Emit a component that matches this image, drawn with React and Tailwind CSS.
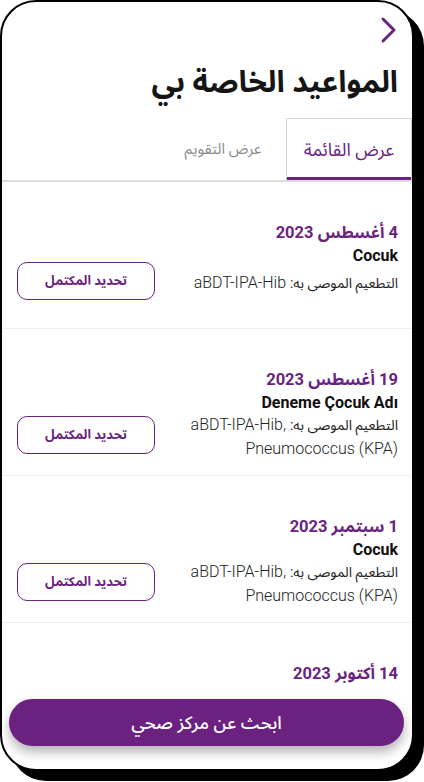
import React from "react";

const appointments = [
  {
    date: "4 أغسطس 2023",
    name: "Cocuk",
    vaccines: ["aBDT-IPA-Hib"],
  },
  {
    date: "19 أغسطس 2023",
    name: "Deneme Çocuk Adı",
    vaccines: ["aBDT-IPA-Hib,", "Pneumococcus (KPA)"],
  },
  {
    date: "1 سبتمبر 2023",
    name: "Cocuk",
    vaccines: ["aBDT-IPA-Hib,", "Pneumococcus (KPA)"],
  },
];

const App = () => {
  return (
    <div className="w-[424px] h-[782px] bg-white overflow-hidden">
      <div
        dir="rtl"
        className="relative w-[414px] h-[771px] bg-white border-2 border-black rounded-[36px] shadow-[10px_10px_0_0_#000] overflow-hidden font-['Roboto','Noto_Sans_Arabic','DejaVu_Sans',sans-serif]"
      >
        {/* Header */}
        <div className="pr-[14px] pt-[14px]">
          <svg width="18" height="28" viewBox="0 0 18 28" className="block">
            <path
              d="M3 3 L14 14 L3 25"
              fill="none"
              stroke="#6b2381"
              strokeWidth="3"
              strokeLinecap="round"
              strokeLinejoin="round"
            />
          </svg>
          <h1 className="mt-[18px] text-[30px] leading-[40px] font-bold text-[#151515]">
            المواعيد الخاصة بي
          </h1>
        </div>

        {/* Tabs */}
        <div className="mt-[16px] flex border-b-2 border-[#dcdcdc]">
          <div className="w-[126px] h-[62px] -mb-[2px] flex items-center justify-center border border-b-0 border-[#d4d4d4] shadow-[inset_0_-3px_0_#6b2381]">
            <span className="text-[18px] text-[#6b2381]">عرض القائمة</span>
          </div>
          <div className="w-[126px] h-[62px] flex items-center justify-center">
            <span className="text-[15px] text-[#8a8a8a]">عرض التقويم</span>
          </div>
        </div>

        {/* List */}
        <div>
          {appointments.map((item, i) => (
            <div
              key={i}
              className="h-[147px] pt-[39px] pr-[14px] pl-[15px] border-b border-[#efefef]"
            >
              <p className="text-[16.5px] leading-[24px] font-bold text-[#6b2381]">
                {item.date}
              </p>
              <p className="text-[16px] leading-[21px] font-bold text-[#111]">
                {item.name}
              </p>
              <div className="flex items-center justify-between">
                <p className="w-[220px] text-[16px] leading-[23px] font-light text-[#222]">
                  <span className="text-[14px] font-normal">التطعيم الموصى به:</span>{" "}
                  {item.vaccines.map((v, j) => (
                    <React.Fragment key={j}>
                      <span className="whitespace-nowrap">{v}</span>{" "}
                    </React.Fragment>
                  ))}
                </p>
                <button className="w-[138px] h-[38px] -mt-[4px] rounded-[10px] border border-[#6b2381] text-[13px] font-bold text-[#6b2381]">
                  تحديد المكتمل
                </button>
              </div>
            </div>
          ))}
          <div className="pt-[39px] pr-[14px]">
            <p className="text-[16.5px] leading-[24px] font-bold text-[#6b2381]">
              14 أكتوبر 2023
            </p>
          </div>
        </div>

        {/* Floating action */}
        <button className="absolute left-[7px] right-[8px] bottom-[23px] h-[47px] rounded-full bg-[#6a2180] text-white text-[18px] font-medium shadow-[0_6px_12px_rgba(0,0,0,0.3)]">
          ابحث عن مركز صحي
        </button>
      </div>
    </div>
  );
};

export default App;
